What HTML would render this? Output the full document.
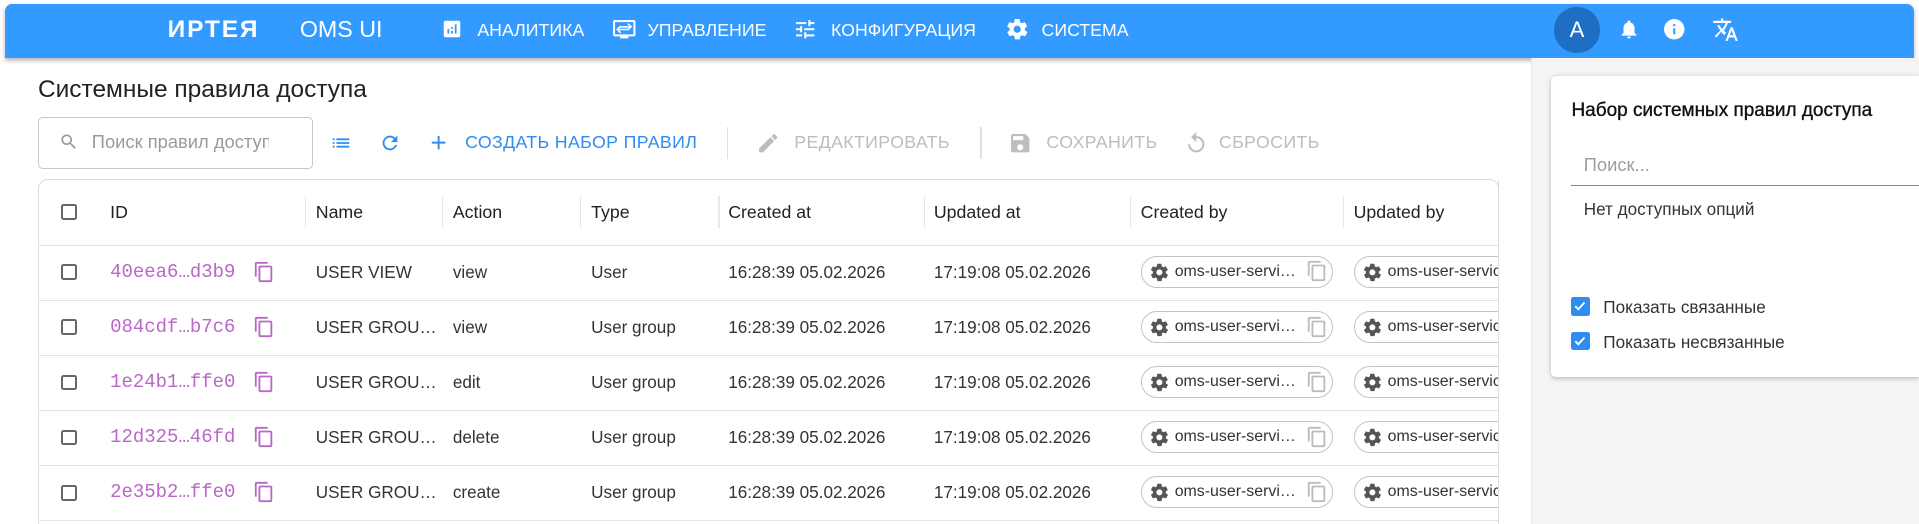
<!DOCTYPE html>
<html><head><meta charset="utf-8"><style>
*{box-sizing:border-box;margin:0;padding:0}
html,body{width:1919px;height:524px;overflow:hidden;background:#fff}
#z{zoom:1.2239;width:1568px;height:428px;position:relative;font-family:"Liberation Sans",sans-serif;color:#212121;overflow:hidden;background:#fff}
.a{position:absolute}
.hdr{left:4px;top:3px;width:1560px;height:44px;background:#339aff;border-radius:6px 6px 0 0;box-shadow:0 2px 4px rgba(0,0,0,.3);color:#fff}
.nav{font-size:14.5px;top:13px;letter-spacing:0}
.side{left:1251px;top:47px;width:317px;height:381px;background:#f4f4f4;border-left:1px solid #e6e6e6}
.card{left:1267px;top:62px;width:301px;height:246px;background:#fff;box-shadow:0 1px 4px rgba(0,0,0,.25);border-radius:4px 0 0 4px}
.tb{font-size:14.5px;top:108px;letter-spacing:.3px}
.tbl{left:31px;top:146px;width:1194px;height:290px;border:1px solid #ddd;border-radius:8px;overflow:hidden}
.cb{width:13px;height:13px;border:2px solid #666;border-radius:2px}
.th{font-size:14.5px;top:165px;color:#222}
.sep{width:1px;height:26px;background:#e8e8e8;top:160px}
.hl{height:1px;background:#e3e3e3;left:31px;width:1194px}
.td{font-size:14px;color:#333}
.id{font-family:"Liberation Mono",monospace;color:#b968c7;font-size:15.5px}
.chip{height:26px;border:1px solid #c4c4c4;border-radius:13px;font-size:13px;color:#333;padding-left:27px;line-height:24px;white-space:nowrap;overflow:hidden}
</style></head><body><div id="z">
<div class="a hdr">
 <div class="a" style="left:133px;top:10px;font-size:20px;font-weight:bold;letter-spacing:1.5px">ИРТЕЯ</div>
 <div class="a" style="left:241px;top:10px;font-size:19px">OMS UI</div>
 <svg class="a" style="left:356px;top:12px" width="18" height="18" viewBox="0 0 24 24"><path fill="#fff" d="M19 3H5a2 2 0 0 0-2 2v14a2 2 0 0 0 2 2h14a2 2 0 0 0 2-2V5a2 2 0 0 0-2-2zM9 17H7v-5h2v5zm4 0h-2v-3h2v3zm0-5h-2v-2h2v2zm4 5h-2V7h2v10z"/></svg>
 <div class="a nav" style="left:386px">АНАЛИТИКА</div>
 <svg class="a" style="left:496px;top:11px" width="20" height="20" viewBox="0 0 24 24"><path fill="#fff" d="M21 3H3a2 2 0 0 0-2 2v12a2 2 0 0 0 2 2h5v2h8v-2h5a2 2 0 0 0 2-2V5a2 2 0 0 0-2-2zm0 14H3V5h18v12zM16 6l-1 1 2 2H7v1.5h10L15 12l1 1 4-3.5zM8 16l1-1-2-2h10v-1.5H7L9 9.5l-1-1L4 12z"/></svg>
 <div class="a nav" style="left:525px">УПРАВЛЕНИЕ</div>
 <svg class="a" style="left:644px;top:11px" width="20" height="20" viewBox="0 0 24 24"><path fill="#fff" d="M3 17v2h6v-2H3zM3 5v2h10V5H3zm10 16v-2h8v-2h-8v-2h-2v6h2zM7 9v2H3v2h4v2h2V9H7zm14 4v-2H11v2h10zm-6-4h2V7h4V5h-4V3h-2v6z"/></svg>
 <div class="a nav" style="left:675px">КОНФИГУРАЦИЯ</div>
 <svg class="a" style="left:817px;top:11px" width="20" height="20" viewBox="0 0 24 24"><path fill="#fff" d="M19.4 13c.04-.3.1-.7.1-1s-.03-.7-.1-1l2.1-1.6c.2-.15.25-.4.1-.6l-2-3.5c-.1-.2-.4-.3-.6-.2l-2.5 1c-.5-.4-1.1-.7-1.7-1l-.4-2.6A.5.5 0 0 0 14 2h-4c-.25 0-.45.2-.5.4l-.4 2.7c-.6.2-1.2.6-1.7 1l-2.5-1c-.2-.1-.5 0-.6.2l-2 3.5c-.1.2-.1.5.1.6L4.6 11c0 .3-.1.7-.1 1s0 .7.1 1l-2.1 1.6c-.2.15-.25.4-.1.6l2 3.5c.1.2.4.3.6.2l2.5-1c.5.4 1.1.7 1.7 1l.4 2.6c0 .3.2.5.5.5h4c.25 0 .45-.2.5-.4l.4-2.7c.6-.2 1.2-.6 1.7-1l2.5 1c.2.1.5 0 .6-.2l2-3.5c.1-.2.1-.5-.1-.6L19.4 13zM12 15.5a3.5 3.5 0 1 1 0-7 3.5 3.5 0 0 1 0 7z"/></svg>
 <div class="a nav" style="left:847px">СИСТЕМА</div>
 <div class="a" style="left:1266px;top:3px;width:37px;height:37px;border-radius:50%;background:#1e6fc4;text-align:center;line-height:37px;font-size:18px">A</div>
 <svg class="a" style="left:1318px;top:11px" width="18" height="20" viewBox="0 0 24 24"><path fill="#fff" d="M12 22c1.1 0 2-.9 2-2h-4a2 2 0 0 0 2 2zm6-6v-5c0-3.1-1.6-5.6-4.5-6.3V4a1.5 1.5 0 0 0-3 0v.7C7.6 5.4 6 7.9 6 11v5l-2 2v1h16v-1l-2-2z"/></svg>
 <svg class="a" style="left:1354px;top:11px" width="20" height="20" viewBox="0 0 24 24"><path fill="#fff" d="M12 2a10 10 0 1 0 0 20 10 10 0 0 0 0-20zm1 15h-2v-6h2v6zm0-8h-2V7h2v2z"/></svg>
 <svg class="a" style="left:1395px;top:9px" width="22" height="24" viewBox="0 0 24 24"><path fill="#fff" d="M12.9 15.1l-2.5-2.5v0c1.7-1.9 3-4.2 3.700-6.6H17V4h-7V2H8v2H1v2h11.2c-.7 1.9-1.7 3.8-3.2 5.4-1-1.1-1.8-2.3-2.4-3.4h-2c.7 1.6 1.700 3.2 3 4.6l-5.1 5 1.4 1.4L8 14l3.1 3.1.8-2zM18.5 10h-2L12 22h2l1.1-3h4.8l1.1 3h2l-4.5-12zm-2.6 7l1.6-4.3 1.6 4.3h-3.2z"/></svg>
</div>
<div class="a side"></div>
<div class="a card">
 <div class="a" style="left:17px;top:20px;font-size:15.5px;color:#111;white-space:nowrap;-webkit-text-stroke:.3px #111">Набор системных правил доступа</div>
 <div class="a" style="left:27px;top:64px;font-size:15px;color:#9e9e9e">Поиск...</div>
 <div class="a" style="left:17px;top:89px;width:284px;height:1px;background:#888"></div>
 <div class="a" style="left:27px;top:101px;font-size:14px;color:#333">Нет доступных опций</div>
 <div class="a" style="left:17px;top:181px;width:15px;height:15px;background:#2f8cf0;border-radius:2px"><svg width="15" height="15" viewBox="0 0 15 15"><path d="M3.5 7.5l2.5 2.5 5-5.5" stroke="#fff" stroke-width="1.6" fill="none"/></svg></div>
 <div class="a" style="left:43px;top:181px;font-size:14px;color:#333">Показать связанные</div>
 <div class="a" style="left:17px;top:209px;width:15px;height:15px;background:#2f8cf0;border-radius:2px"><svg width="15" height="15" viewBox="0 0 15 15"><path d="M3.5 7.5l2.5 2.5 5-5.5" stroke="#fff" stroke-width="1.6" fill="none"/></svg></div>
 <div class="a" style="left:43px;top:209px;font-size:14px;color:#333">Показать несвязанные</div>
</div>
<div class="a" style="left:31px;top:62px;font-size:20px;color:#222">Системные правила доступа</div>
<div class="a" style="left:31px;top:96px;width:225px;height:42px;border:1px solid #c8c8c8;border-radius:4px"></div>
<svg class="a" style="left:48px;top:108px" width="16" height="16" viewBox="0 0 24 24"><path fill="#999" d="M15.5 14h-.8l-.3-.3A6.5 6.5 0 1 0 9.5 16a6.5 6.5 0 0 0 4.2-1.6l.3.3v.8l5 5 1.5-1.5-5-5zm-6 0a4.5 4.5 0 1 1 0-9 4.5 4.5 0 0 1 0 9z"/></svg>
<div class="a" style="left:75px;top:107px;font-size:15px;color:#9a9a9a;width:145px;overflow:hidden;white-space:nowrap">Поиск правил доступа</div>
<svg class="a" style="left:270px;top:108px" width="18" height="18" viewBox="0 0 24 24"><path fill="#2f8cf0" d="M3 13h2v-2H3v2zm0 4h2v-2H3v2zm0-8h2V7H3v2zm4 4h14v-2H7v2zm0 4h14v-2H7v2zM7 7v2h14V7H7z"/></svg>
<svg class="a" style="left:310px;top:108px" width="18" height="18" viewBox="0 0 24 24"><path fill="#2f8cf0" d="M17.65 6.35A8 8 0 1 0 19.7 14h-2.1A6 6 0 1 1 12 6c1.66 0 3.14.69 4.220 1.78L13 11h7V4l-2.35 2.35z"/></svg>
<svg class="a" style="left:349px;top:107px" width="19" height="19" viewBox="0 0 24 24"><path fill="#2f8cf0" d="M19 13h-6v6h-2v-6H5v-2h6V5h2v6h6v2z"/></svg>
<div class="a tb" style="left:380px;color:#2f8cf0">СОЗДАТЬ НАБОР ПРАВИЛ</div>
<div class="a" style="left:594px;top:104px;width:1px;height:26px;background:#e0e0e0"></div>
<svg class="a" style="left:618px;top:107px" width="20" height="20" viewBox="0 0 24 24"><path fill="#bdbdbd" d="M3 17.25V21h3.75L17.8 9.94l-3.75-3.75L3 17.25zM20.7 7.04a1 1 0 0 0 0-1.41l-2.34-2.34a1 1 0 0 0-1.41 0l-1.83 1.83 3.75 3.75 1.83-1.830z"/></svg>
<div class="a tb" style="left:649px;color:#bdbdbd">РЕДАКТИРОВАТЬ</div>
<div class="a" style="left:801px;top:104px;width:1px;height:26px;background:#e0e0e0"></div>
<svg class="a" style="left:824px;top:107px" width="20" height="20" viewBox="0 0 24 24"><path fill="#bdbdbd" d="M17 3H5a2 2 0 0 0-2 2v14a2 2 0 0 0 2 2h14a2 2 0 0 0 2-2V7l-4-4zm-5 16a3 3 0 1 1 0-6 3 3 0 0 1 0 6zm3-10H5V5h10v4z"/></svg>
<div class="a tb" style="left:855px;color:#bdbdbd">СОХРАНИТЬ</div>
<svg class="a" style="left:967px;top:107px" width="20" height="20" viewBox="0 0 24 24"><path fill="#bdbdbd" d="M12 5V1L7 6l5 5V7a6 6 0 1 1-6 6H4a8 8 0 1 0 8-8z"/></svg>
<div class="a tb" style="left:996px;color:#bdbdbd">СБРОСИТЬ</div>
<div class="a tbl"></div>
<div class="a cb" style="left:50px;top:167px"></div>
<div class="a th" style="left:90px">ID</div>
<div class="a sep" style="left:249px"></div><div class="a th" style="left:258px">Name</div>
<div class="a sep" style="left:361px"></div><div class="a th" style="left:370px">Action</div>
<div class="a sep" style="left:474px"></div><div class="a th" style="left:483px">Type</div>
<div class="a sep" style="left:587px"></div><div class="a th" style="left:595px">Created at</div>
<div class="a sep" style="left:755px"></div><div class="a th" style="left:763px">Updated at</div>
<div class="a sep" style="left:923px"></div><div class="a th" style="left:932px">Created by</div>
<div class="a sep" style="left:1097px"></div><div class="a th" style="left:1106px">Updated by</div>
<div id="rows"></div>
<script>
var R=[["40eea6…d3b9","USER VIEW","view","User"],["084cdf…b7c6","USER GROU…","view","User group"],["1e24b1…ffe0","USER GROU…","edit","User group"],["12d325…46fd","USER GROU…","delete","User group"],["2e35b2…ffe0","USER GROU…","create","User group"]];
var gear='<svg style="position:absolute;left:6px;top:4px" width="17" height="17" viewBox="0 0 24 24"><path fill="#555" d="M19.4 13c.04-.3.1-.7.1-1s-.03-.7-.1-1l2.1-1.6c.2-.15.25-.4.1-.6l-2-3.5c-.1-.2-.4-.3-.6-.2l-2.5 1c-.5-.4-1.1-.7-1.7-1l-.4-2.6A.5.5 0 0 0 14 2h-4c-.25 0-.45.2-.5.4l-.4 2.7c-.6.2-1.2.6-1.7 1l-2.5-1c-.2-.1-.5 0-.6.2l-2 3.5c-.1.2-.1.5.1.6L4.6 11c0 .3-.1.7-.1 1s0 .7.1 1l-2.1 1.6c-.2.15-.25.4-.1.6l2 3.5c.1.2.4.3.6.2l2.5-1c.5.4 1.1.7 1.7 1l.4 2.6c0 .3.2.5.5.5h4c.25 0 .45-.2.5-.4l.4-2.7c.6-.2 1.2-.6 1.7-1l2.5 1c.2.1.5 0 .6-.2l2-3.5c.1-.2.1-.5-.1-.6L19.4 13zM12 15.5a3.5 3.5 0 1 1 0-7 3.5 3.5 0 0 1 0 7z"/></svg>';
function copy(c,x,y){return '<svg class="a" style="left:'+x+'px;top:'+y+'px" width="18" height="18" viewBox="0 0 24 24"><path fill="'+c+'" d="M16 1H4a2 2 0 0 0-2 2v14h2V3h12V1zm3 4H8a2 2 0 0 0-2 2v14a2 2 0 0 0 2 2h11a2 2 0 0 0 2-2V7a2 2 0 0 0-2-2zm0 16H8V7h11v14z"/></svg>';}
var h='';
for(var i=0;i<5;i++){var y=200+i*45,t=y+14;
h+='<div class="a hl" style="top:'+y+'px"></div>';
h+='<div class="a cb" style="left:50px;top:'+(y+16)+'px"></div>';
h+='<div class="a id" style="left:90px;top:'+(t-1)+'px">'+R[i][0]+'</div>'+copy('#b968c7',207,y+13);
h+='<div class="a td" style="left:258px;top:'+t+'px">'+R[i][1]+'</div>';
h+='<div class="a td" style="left:370px;top:'+t+'px">'+R[i][2]+'</div>';
h+='<div class="a td" style="left:483px;top:'+t+'px">'+R[i][3]+'</div>';
h+='<div class="a td" style="left:595px;top:'+t+'px">16:28:39 05.02.2026</div>';
h+='<div class="a td" style="left:763px;top:'+t+'px">17:19:08 05.02.2026</div>';
h+='<div class="a chip" style="left:932px;top:'+(y+9)+'px;width:157px">'+gear+'oms-user-servi…'+copy('#bbb',134,3).replace('class="a"','style="position:absolute;left:134px;top:3px"')+'</div>';
h+='<div class="a chip" style="left:1106px;top:'+(y+9)+'px;width:140px">'+gear+'oms-user-service</div>';
}
h+='<div class="a hl" style="top:425px"></div>';
h+='<div class="a" style="left:1225px;top:146px;width:26px;height:290px;background:#fff"></div>';
h+='<div class="a" style="left:1224px;top:147px;width:1px;height:290px;background:#ddd"></div>';
document.getElementById('rows').innerHTML=h;
</script>
</div></body></html>
